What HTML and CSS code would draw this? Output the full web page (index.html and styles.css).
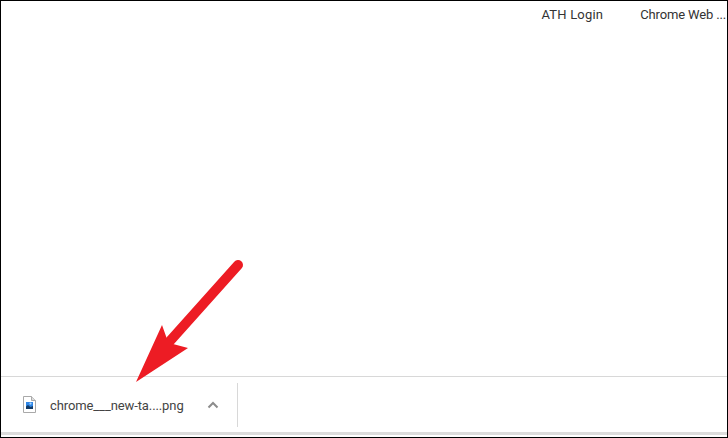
FILE: index.html
```html
<!DOCTYPE html>
<html lang="en">
<head>
    <meta charset="UTF-8">
    <meta name="viewport" content="width=device-width, initial-scale=1.0">
    <title>Downloads</title>
    <link rel="stylesheet" href="styles.css">
</head>
<body>
    <div class="window">
        <div class="bookmarks">
            <span class="bookmark login">ATH Login</span>
            <span class="bookmark store">Chrome Web ...</span>
        </div>
        <div class="content"></div>
        <div class="shelf">
            <div class="download">
                <svg class="file-icon" width="13" height="17" viewBox="0 0 13 17">
                    <path d="M.5 .5H8.5L12.5 4.5V16.5H.5Z" fill="#fff" stroke="#a9a9a9"/>
                    <path d="M8.5 .5V4.5H12.5" fill="#ddd" stroke="#a9a9a9"/>
                    <rect x="3" y="6" width="7" height="7" fill="#2f86e6"/>
                    <circle cx="7.5" cy="7.6" r="1.1" fill="#a8d4fb"/>
                    <path d="M3 13V10.5L5 9L7.5 11L10 10V13Z" fill="#123a66"/>
                </svg>
                <span class="file-name">chrome___new-ta....png</span>
                <svg class="chevron" width="12" height="8" viewBox="0 0 12 8">
                    <path d="M1.5 6.5L6 2L10.5 6.5" fill="none" stroke="#8c8c8c" stroke-width="2"/>
                </svg>
            </div>
            <div class="divider"></div>
        </div>
        <div class="shelf-edge"></div>
    </div>
    <svg class="arrow" width="728" height="438" viewBox="0 0 728 438">
        <path d="M238 265L170 341" stroke="#ed1c24" stroke-width="10" stroke-linecap="round" fill="none"/>
        <path d="M136 382L162 325L167 339L173 344L188 348Z" fill="#ed1c24"/>
    </svg>
</body>
</html>
```

FILE: styles.css
```css
html, body {
    height: 100%;
}

body {
    margin: 0;
    font-family: Roboto, "Liberation Sans", sans-serif;
    background-color: #fff;
}

.window {
    display: flex;
    flex-direction: column;
    box-sizing: border-box;
    height: 438px;
    border: 1px solid #000;
}

.bookmarks {
    display: flex;
    justify-content: flex-end;
    height: 27px;
    padding-top: 6px;
    box-sizing: border-box;
    font-size: 13px;
    line-height: 16px;
    color: #333;
}

.login {
    margin-right: 37px;
    letter-spacing: .2px;
}

.store {
    margin-right: 1px;
    letter-spacing: -.15px;
}

.content {
    flex: 1;
}

.shelf {
    display: flex;
    align-items: center;
    height: 55px;
    border-top: 1px solid #d8d8d8;
}

.download {
    display: flex;
    align-items: center;
    box-sizing: border-box;
    width: 236px;
    padding-left: 22px;
}

.file-name {
    margin-left: 14px;
    font-size: 13px;
    letter-spacing: -.1px;
    color: #444;
    position: relative;
    top: 1px;
}

.chevron {
    margin-left: 23px;
}

.divider {
    width: 1px;
    height: 44px;
    background-color: #d8d8d8;
}

.shelf-edge {
    height: 3px;
    margin-bottom: 2px;
    background-color: #dcdcdc;
}

.arrow {
    position: absolute;
    top: 0;
    left: 0;
}
```
